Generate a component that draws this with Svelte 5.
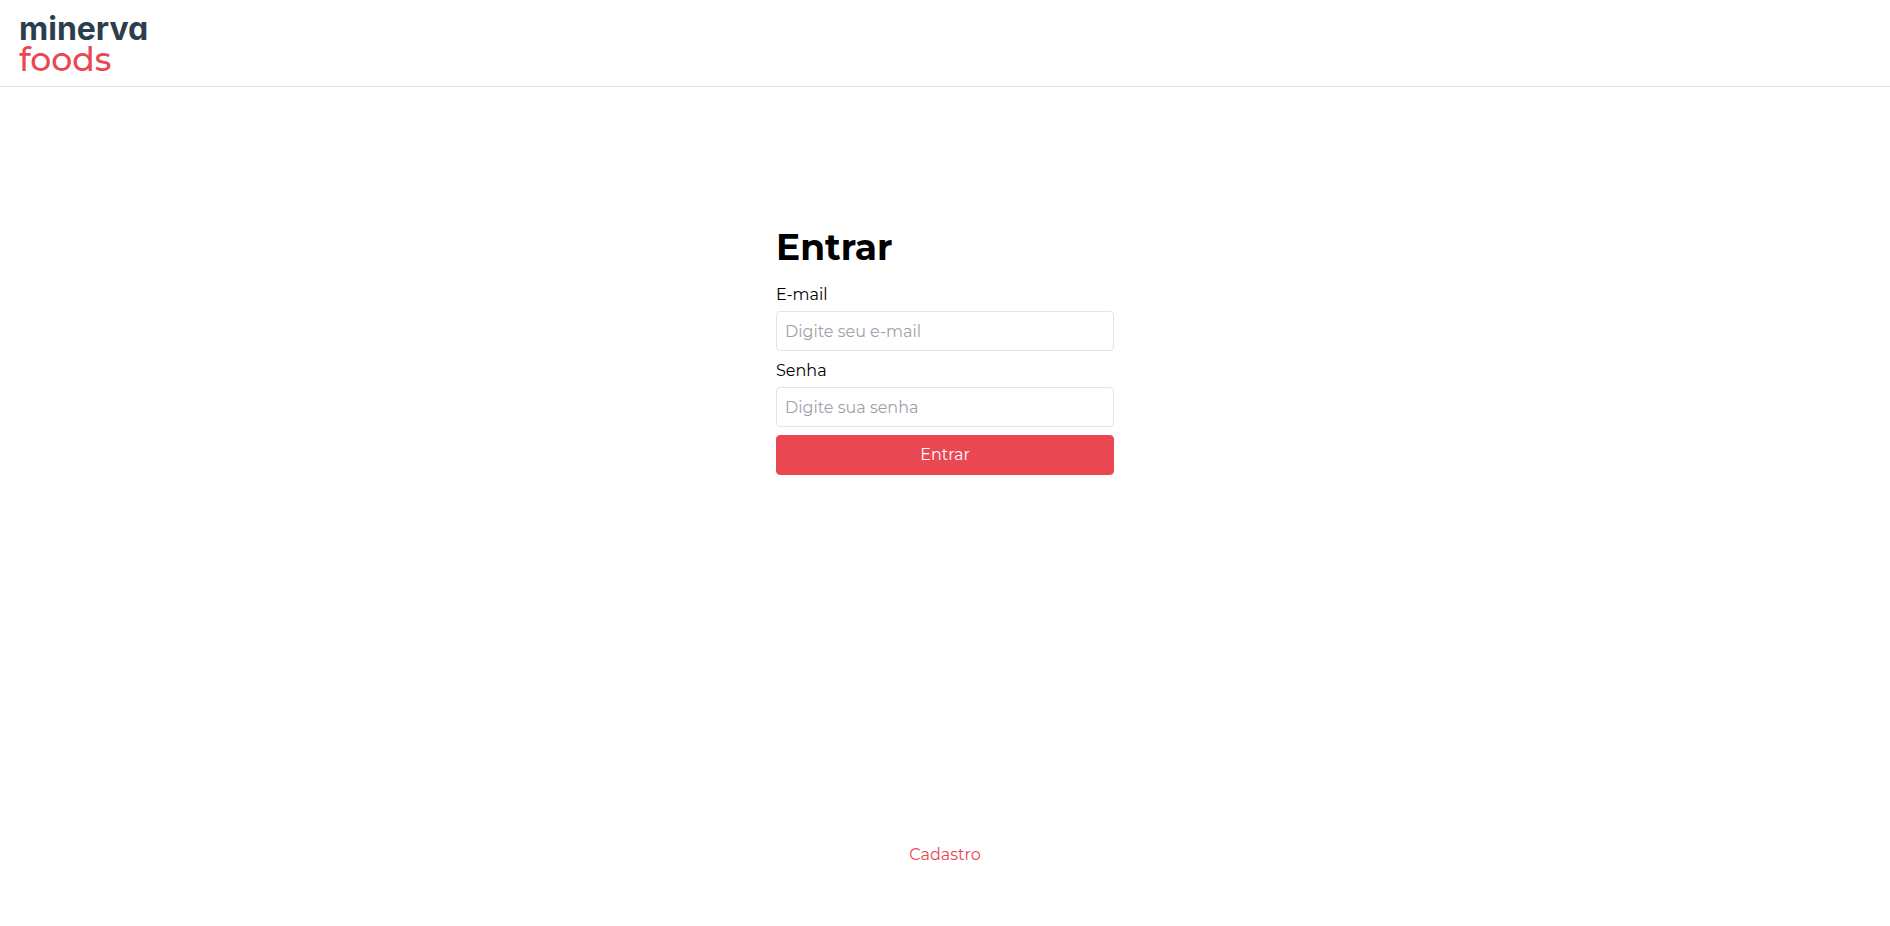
<script>
  let email = $state('');
  let password = $state('');

  function submit(event) {
    event.preventDefault();
  }
</script>

<div class="page">
  <header>
    <a class="logo" href="/" aria-label="minerva foods">
      <span class="brand">minerva</span>
      <span class="sub">foods</span>
    </a>
  </header>

  <main>
    <form onsubmit={submit}>
      <h1>Entrar</h1>
      <div class="field">
        <label for="email">E-mail</label>
        <input id="email" type="email" placeholder="Digite seu e-mail" bind:value={email} />
      </div>
      <div class="field">
        <label for="password">Senha</label>
        <input id="password" type="password" placeholder="Digite sua senha" bind:value={password} />
      </div>
      <button type="submit">Entrar</button>
    </form>
    <a class="register" href="/cadastro">Cadastro</a>
  </main>
</div>

<style>
  :global(body) {
    margin: 0;
    background: #fff;
  }

  .page {
    display: flex;
    flex-direction: column;
    min-height: 100vh;
    color: #000;
    font-family: Montserrat, Inter, sans-serif;
    font-size: 16px;
    line-height: 24px;
  }

  header {
    display: flex;
    padding: 14px 19px 12px;
    border-bottom: 1px solid #e4e4e7;
  }

  .logo {
    display: flex;
    flex-direction: column;
    line-height: 30px;
    text-decoration: none;
  }

  .brand {
    color: #2c3e4d;
    font-family: Inter, sans-serif;
    /* single-storey a */
    font-feature-settings: 'cv11';
    font-size: 32px;
    font-weight: 700;
  }

  .sub {
    color: #e94751;
    font-size: 33px;
    font-weight: 500;
  }

  main {
    display: flex;
    flex: 1;
    flex-direction: column;
    align-items: center;
    justify-content: space-between;
    padding: 140px 16px 59px;
  }

  form {
    display: flex;
    flex-direction: column;
    gap: 8px;
    width: 100%;
    max-width: 338px;
  }

  h1 {
    margin: 0 0 8px;
    font-size: 36px;
    font-weight: 700;
    line-height: 40px;
  }

  .field {
    display: flex;
    flex-direction: column;
    gap: 4px;
  }

  input,
  button {
    box-sizing: border-box;
    width: 100%;
    height: 40px;
    padding: 0 8px;
    border: 1px solid #e4e4e7;
    border-radius: 4px;
    font: inherit;
  }

  input {
    background: #fff;
  }

  input::placeholder {
    color: #a1a1aa;
    opacity: 1;
  }

  button {
    border-color: #e94751;
    background: #e94751;
    color: #fff;
    cursor: pointer;
  }

  .register {
    color: #e94751;
    text-decoration: none;
  }
</style>
